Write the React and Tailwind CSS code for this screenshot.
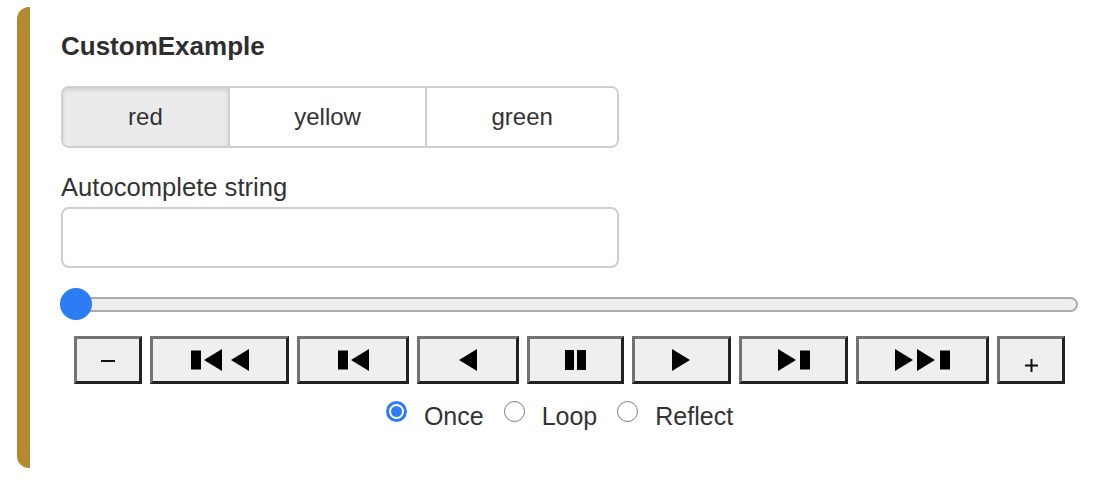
import React, { useState } from "react";

const font = { fontFamily: '"Liberation Sans", Arial, Helvetica, sans-serif' };

const Tri = ({ dir }) =>
  dir === "left" ? (
    <polygon points="18,0 18,22 0,11" />
  ) : (
    <polygon points="0,0 0,22 18,11" />
  );

// glyphs drawn as plain shapes, sized from the screenshot
const icons = {
  minus: (
    <svg width="14" height="2" viewBox="0 0 14 2" className="mt-[2px]">
      <rect x="0" y="0" width="14" height="2" fill="#111" />
    </svg>
  ),
  first: (
    <svg width="58" height="22" viewBox="0 0 58 22">
      <rect x="0" y="1.5" width="10" height="19" />
      <g transform="translate(13 0)">
        <Tri dir="left" />
      </g>
      <g transform="translate(40 0)">
        <Tri dir="left" />
      </g>
    </svg>
  ),
  stepBack: (
    <svg width="31" height="22" viewBox="0 0 31 22">
      <rect x="0" y="1.5" width="10" height="19" />
      <g transform="translate(13 0)">
        <Tri dir="left" />
      </g>
    </svg>
  ),
  back: (
    <svg width="18" height="22" viewBox="0 0 18 22">
      <Tri dir="left" />
    </svg>
  ),
  pause: (
    <svg width="21" height="20" viewBox="0 0 21 20">
      <rect x="0" y="0" width="9" height="20" />
      <rect x="12" y="0" width="9" height="20" />
    </svg>
  ),
  play: (
    <svg width="19" height="22" viewBox="0 0 19 22">
      <Tri dir="right" />
    </svg>
  ),
  stepForward: (
    <svg width="32" height="22" viewBox="0 0 32 22">
      <Tri dir="right" />
      <rect x="22" y="1.5" width="10" height="19" />
    </svg>
  ),
  last: (
    <svg width="55" height="22" viewBox="0 0 55 22">
      <Tri dir="right" />
      <g transform="translate(22 0)">
        <Tri dir="right" />
      </g>
      <rect x="45" y="1.5" width="10" height="19" />
    </svg>
  ),
  plus: (
    <svg width="13" height="13" viewBox="0 0 13 13" className="mt-[11px]">
      <rect x="5.5" y="0" width="2" height="13" fill="#111" />
      <rect x="0" y="5.5" width="13" height="2" fill="#111" />
    </svg>
  ),
};

const controls = [
  { key: "minus", w: "w-[68px]" },
  { key: "first", w: "w-[139px]" },
  { key: "stepBack", w: "w-[112px]" },
  { key: "back", w: "w-[102px]" },
  { key: "pause", w: "w-[97px]" },
  { key: "play", w: "w-[99px]" },
  { key: "stepForward", w: "w-[109px]" },
  { key: "last", w: "w-[133px]" },
  { key: "plus", w: "w-[68px]" },
];

const colors = [
  { label: "red", w: "w-[166px]" },
  { label: "yellow", w: "w-[199px]" },
  { label: "green", w: "w-[193px]" },
];

const modes = ["Once", "Loop", "Reflect"];

export default function App() {
  const [color, setColor] = useState("red");
  const [mode, setMode] = useState("Once");
  const [text, setText] = useState("");

  return (
    <div className="min-h-screen bg-white pt-[7px]" style={font}>
      <div className="mx-[17px] bg-white border-l-[13px] border-[#b38a2f] rounded-l-[12px] pl-[31px] pr-[13px] pt-[24px] pb-[37px] text-[#333]">
        <h2 className="text-[26px] leading-[30px] font-bold text-[#2e2e2e]">CustomExample</h2>

        {/* colour choice */}
        <div className="mt-[25px] flex w-[558px] h-[62px] border-2 border-[#cfcfcf] rounded-[8px] overflow-hidden">
          {colors.map((c, i) => (
            <button
              key={c.label}
              onClick={() => setColor(c.label)}
              className={`${c.w} h-full flex items-center justify-center text-[24px] text-[#333] ${
                i > 0 ? "border-l-2 border-[#cfcfcf]" : ""
              } ${
                color === c.label
                  ? "bg-[#ebebeb] shadow-[inset_0_2px_4px_rgba(0,0,0,0.12)]"
                  : "bg-white"
              }`}
            >
              {c.label}
            </button>
          ))}
        </div>

        <label className="block mt-[24px] text-[25.6px] leading-[30px]">
          Autocomplete string
        </label>
        <input
          value={text}
          onChange={(e) => setText(e.target.value)}
          className="mt-[5px] block w-[558px] h-[61px] border-2 border-[#cfcfcf] rounded-[8px] px-3 text-[24px] outline-none"
        />

        {/* frame slider */}
        <div className="mt-[20px] relative h-[32px] flex items-center">
          <div className="w-full h-[15px] rounded-full border-2 border-[#ababab] bg-[#eeeeee]" />
          <div className="absolute left-[-1px] top-0 w-[32px] h-[32px] rounded-full bg-[#2c7cf4]" />
        </div>

        {/* playback buttons */}
        <div className="mt-[16px] flex justify-center gap-[8px]">
          {controls.map((b) => (
            <button
              key={b.key}
              className={`${b.w} h-[48px] flex items-center justify-center bg-[#efefef] border-[3px] border-t-[#737373] border-l-[#737373] border-b-[#222] border-r-[#222] fill-black`}
            >
              {icons[b.key]}
            </button>
          ))}
        </div>

        {/* loop mode */}
        <div className="mt-[17px] flex justify-center gap-[20px] pr-[20px]">
          {modes.map((m) => (
            <label
              key={m}
              onClick={() => setMode(m)}
              className="flex items-start gap-[17px] text-[25px] leading-[30px] cursor-pointer"
            >
              {mode === m ? (
                <span className="block shrink-0 w-[21px] h-[21px] rounded-full border-[3px] border-[#2f7bf6] flex items-center justify-center">
                  <span className="block w-[11px] h-[11px] rounded-full bg-[#2f7bf6]" />
                </span>
              ) : (
                <span className="block shrink-0 w-[21px] h-[21px] rounded-full border-[1.5px] border-[#7a7a7a] bg-white" />
              )}
              {m}
            </label>
          ))}
        </div>
      </div>
    </div>
  );
}
